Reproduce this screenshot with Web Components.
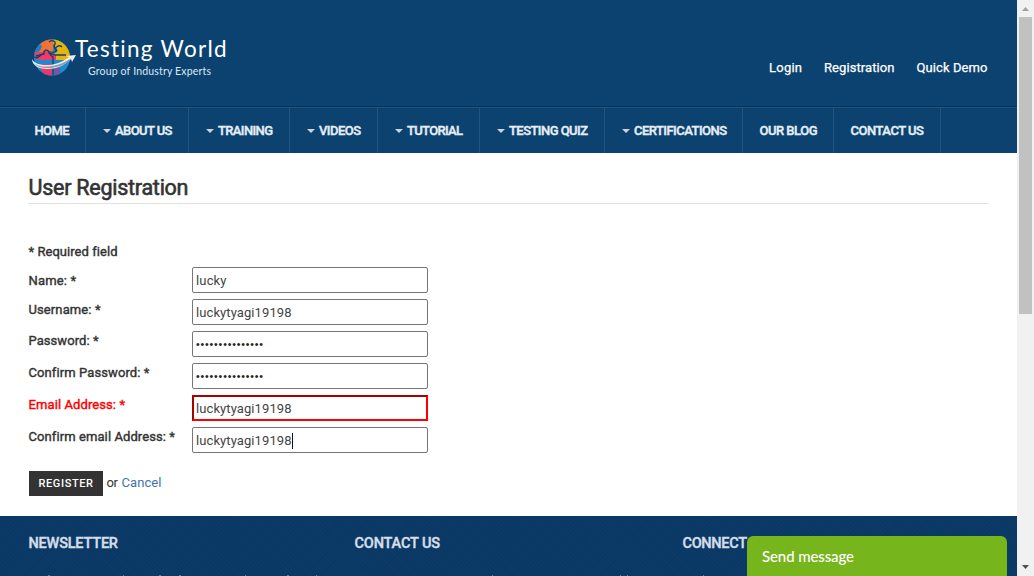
<!DOCTYPE html>
<html lang="en"><head><meta charset="utf-8"><title>User Registration</title>
<style>html,body{margin:0;height:576px;overflow:hidden;background:#fff}body{font-family:Roboto,"Liberation Sans",sans-serif;font-size:13px;color:#333}</style></head>
<body><tw-app></tw-app>
<script>
const define=(name,html,setup)=>customElements.define(name,class extends HTMLElement{
  connectedCallback(){
    if(this.shadowRoot)return;
    const t=document.createElement('template');t.innerHTML=html;
    this.attachShadow({mode:'open'}).append(t.content.cloneNode(true));
    if(setup)setup(this,this.shadowRoot);
  }
});
/* Text tracked so that it spans exactly the width in "w". */
define('fit-text','<style>:host{display:block;white-space:nowrap;flex:none}span{display:inline-block}</style><span><slot></slot></span>',(h,r)=>{
  const s=r.querySelector('span'),w=+h.getAttribute('w');
  h.style.width=w+'px';
  const n=h.textContent.length;
  s.style.letterSpacing=((w-s.getBoundingClientRect().width)/(n-1))+'px';
});
define('tw-logo',`<style>:host{display:flex;color:#fff;font-family:Lato,sans-serif;width:200px;height:46px}svg{flex:none;margin-top:1px}.t{margin-left:-2px}.a{font-size:22.5px;line-height:26px}.b{font-size:10.5px;line-height:14px;margin:2px 0 0 13px;color:#dce8f2}</style>
<svg width="45" height="42" viewBox="0 0 45 42"><defs><clipPath id="c"><circle cx="20" cy="20.5" r="18"/></clipPath></defs>
<g clip-path="url(#c)"><path fill="#1b8bd0" d="M0 0h45v42H0z"/><path fill="#ee7335" d="M5 0h16v16H2z"/><path fill="#e6b40e" d="M21 1h20v22H24l-3-5 5-4-3-5-2-3z"/><path fill="#1b80c3" d="M0 6h6l4 3-2 5-8 3z"/><path fill="#f03a6c" d="M2 15h9l3-3 4 5 6 1v5H5z"/><path fill="#ec3868" d="M7 27h13v12h-8z"/><path fill="#7157a8" d="M22 29h6v9h-6z"/><path d="M17 5c4-3 8 0 5 4l2 5c-4 3-6 0-7 1s3 4 4 5v18m-17-19 8-2c-1-5 5-5 5-1l6 2h11M12 16l-7 5c-4-2-7 0-5 4m25-11c-4-3 2-7 5-4" fill="none" stroke="#173e65" stroke-width="1.3"/></g>
<path d="M0 22c2 5 10 6.500 17 6 8-.5 15-4 20-8l-3-1 10-1-4 7-1-3c-7 7-15 10-24 10C6 32 0 28 0 22z" fill="#e9edf1"/><path d="M2 26.500c8 5.500 24 3.500 37-5l0 1C29 32 9 34 2 26.500z" fill="#8b9cab"/></svg>
<div class="t"><fit-text class="a" w="152">Testing World</fit-text><fit-text class="b" w="123">Group of Industry Experts</fit-text></div>`);
define('tw-header',`<style>:host{display:flex;height:107px;box-sizing:border-box;background:#0c426f;border-bottom:1px solid #09345a;padding:36px 29.5px 0 32px;justify-content:space-between}.l{display:flex;gap:22px;color:#fff;-webkit-text-stroke:.25px;line-height:20px;margin-top:22px}</style><tw-logo></tw-logo><div class="l"><fit-text w="33">Login</fit-text><fit-text w="70.500">Registration</fit-text><fit-text w="71">Quick Demo</fit-text></div>`);
define('nav-item',`<style>:host{display:flex;box-sizing:border-box;border-right:1px solid #24547d;height:45px;align-items:center;flex:none;padding:0 0 0 16px}i{display:none;width:0;height:0;border:4px solid transparent;border-top-color:#cfd3d8;border-bottom:0;margin:0 4px 0 1px}:host([menu]) i{display:block}fit-text{color:#e6eef5;font-weight:500;-webkit-text-stroke:.4px;font-size:13px;line-height:20px}</style><i></i>`,(h,r)=>{
  h.style.width=h.getAttribute('box')+'px';
  const f=document.createElement('fit-text');f.setAttribute('w',h.getAttribute('w'));f.textContent=h.getAttribute('label');r.append(f);
});
define('tw-nav',`<style>:host{display:flex;box-sizing:border-box;height:46px;background:#0c426f;border-top:1px solid #1e5580;padding-left:18px}nav-item:not([menu]){padding-left:16.5px}</style>
<nav-item label="HOME" w="35" box="68"></nav-item><nav-item menu label="ABOUT US" w="57.500" box="103"></nav-item><nav-item menu label="TRAINING" w="55" box="101"></nav-item><nav-item menu label="VIDEOS" w="42" box="88"></nav-item><nav-item menu label="TUTORIAL" w="56" box="102"></nav-item><nav-item menu label="TESTING QUIZ" w="79" box="125"></nav-item><nav-item menu label="CERTIFICATIONS" w="93" box="138"></nav-item><nav-item label="OUR BLOG" w="58" box="91"></nav-item><nav-item label="CONTACT US" w="73.500" box="107"></nav-item>`);
define('form-field',`<style>:host{display:flex;height:26px;margin-bottom:6px}.l{width:163.5px;padding-left:.5px;flex:none;-webkit-text-stroke:.4px;line-height:20px}.i{width:236px;height:26px;box-sizing:border-box;border:1px solid #767676;border-radius:2px;background:#fff;padding:1px 0 0 3px;display:flex;align-items:center;line-height:20px;color:#444}:host([error]) .l{color:#f00}:host([error]) .i{border:2px solid;border-color:#a90000 #f00 #f00 #a90000;border-radius:0;padding-left:2px}:host([secret]) .i{font:10.5px/20px "Liberation Sans",sans-serif;color:#222;padding-top:0}:host([caret]) .i fit-text{border-right:1px solid #111;line-height:16px}</style><div class="l"></div><div class="i"></div>`,(h,r)=>{
  const make=(sel,w,text)=>{const f=document.createElement('fit-text');f.setAttribute('w',w);f.textContent=text;r.querySelector(sel).append(f)};
  make('.l',h.getAttribute('lw'),h.getAttribute('label'));make('.i',h.getAttribute('vw'),h.getAttribute('value'));
  r.querySelector('.l').style.paddingTop=h.getAttribute('top')+'px';
});
define('registration-form',`<style>:host{display:block;box-sizing:border-box;height:363px;padding:20px 28px 0 28px}.h{font-size:21.5px;-webkit-text-stroke:.6px;line-height:30px;border-bottom:1px solid #e2e2e2;width:961px;box-sizing:border-box;height:31px;padding-left:.5px}.r{-webkit-text-stroke:.4px;line-height:20px;margin:38px 0 5px;padding-left:.5px}.b{display:flex;align-items:center;margin:18px 0 0 1px;height:25px}button{all:unset;box-sizing:border-box;width:74px;height:25px;background:#333;color:#fff;padding-left:9.5px;font-size:11px;font-weight:500;line-height:25px}.b>fit-text{line-height:20px;margin-left:3.5px;margin-top:-1px}.c{color:#3e74ad}</style>
<div class="h"><fit-text w="160">User Registration</fit-text></div><div class="r"><fit-text w="88.500">* Required field</fit-text></div>
<form-field label="Name: *" lw="47.500" top="4" value="lucky" vw="30.500"></form-field>
<form-field label="Username: *" lw="72" top="1" value="luckytyagi19198" vw="95.500"></form-field>
<form-field label="Password: *" lw="70" top="0" secret value="•••••••••••••••" vw="67"></form-field>
<form-field label="Confirm Password: *" lw="120.500" top="0" secret value="•••••••••••••••" vw="67"></form-field>
<form-field error label="Email Address: *" lw="96.500" top="0" value="luckytyagi19198" vw="95.500"></form-field>
<form-field caret label="Confirm email Address: *" lw="146" top="0" value="luckytyagi19198" vw="95.500"></form-field>
<div class="b"><button><fit-text w="54.500">REGISTER</fit-text></button><fit-text w="11.5">or</fit-text><fit-text class="c" w="40">Cancel</fit-text></div>`);
define('tw-footer',`<style>:host{display:flex;flex-direction:column;justify-content:space-between;box-sizing:border-box;height:60px;background:repeating-linear-gradient(45deg,#ffffff03 0 1px,transparent 1px 3px),repeating-linear-gradient(-45deg,#00000008 0 1px,transparent 1px 3px),#0a3966;padding:18px 0 0 28px}.g{display:grid;grid-template-columns:326px 328px 1fr;color:#d5dee8;font-size:14.5px;font-weight:500;-webkit-text-stroke:.4px;line-height:20px;padding-left:.5px}svg{display:block}</style><div class="g"><fit-text w="89.500">NEWSLETTER</fit-text><fit-text w="85.500">CONTACT US</fit-text><fit-text w="64.500">CONNECT</fit-text></div><svg width="700" height="1"><path d="M20 .5h2m73 0h1m35 0h2m18 0h2m64 0h1m41 0h2m27 0h1m175 0h1m127 0h1m6 0h1m75 0h1" stroke="#4e87b7"/></svg>`);
define('page-scrollbar',`<style>:host{display:flex;flex-direction:column;align-items:center;width:17px;height:576px;background:#f1f1f1;flex:none}div{width:13px;height:297px;background:#c1c1c1;margin-bottom:auto}svg{display:block}</style><svg width="17" height="17"><path d="M5 11h7L8.5 7z" fill="#a0a0a0"/></svg><div></div><svg width="17" height="17"><path d="M5 6h7l-3.5 4z" fill="#505050"/></svg>`);
define('send-message',`<style>:host{position:absolute;left:747px;top:536px;width:260px;height:40px;box-sizing:border-box;background:#77b51d;border-radius:6px 6px 0 0;padding:9px 15px;color:#fff;font:500 15px/22px Lato,sans-serif}</style><fit-text w="92">Send message</fit-text>`);
define('tw-app',`<style>:host{display:flex;width:1034px;height:576px;position:relative}main{width:1017px;flex:none}</style><main><tw-header></tw-header><tw-nav></tw-nav><registration-form></registration-form><tw-footer></tw-footer></main><page-scrollbar></page-scrollbar><send-message></send-message>`);
</script></body></html>
